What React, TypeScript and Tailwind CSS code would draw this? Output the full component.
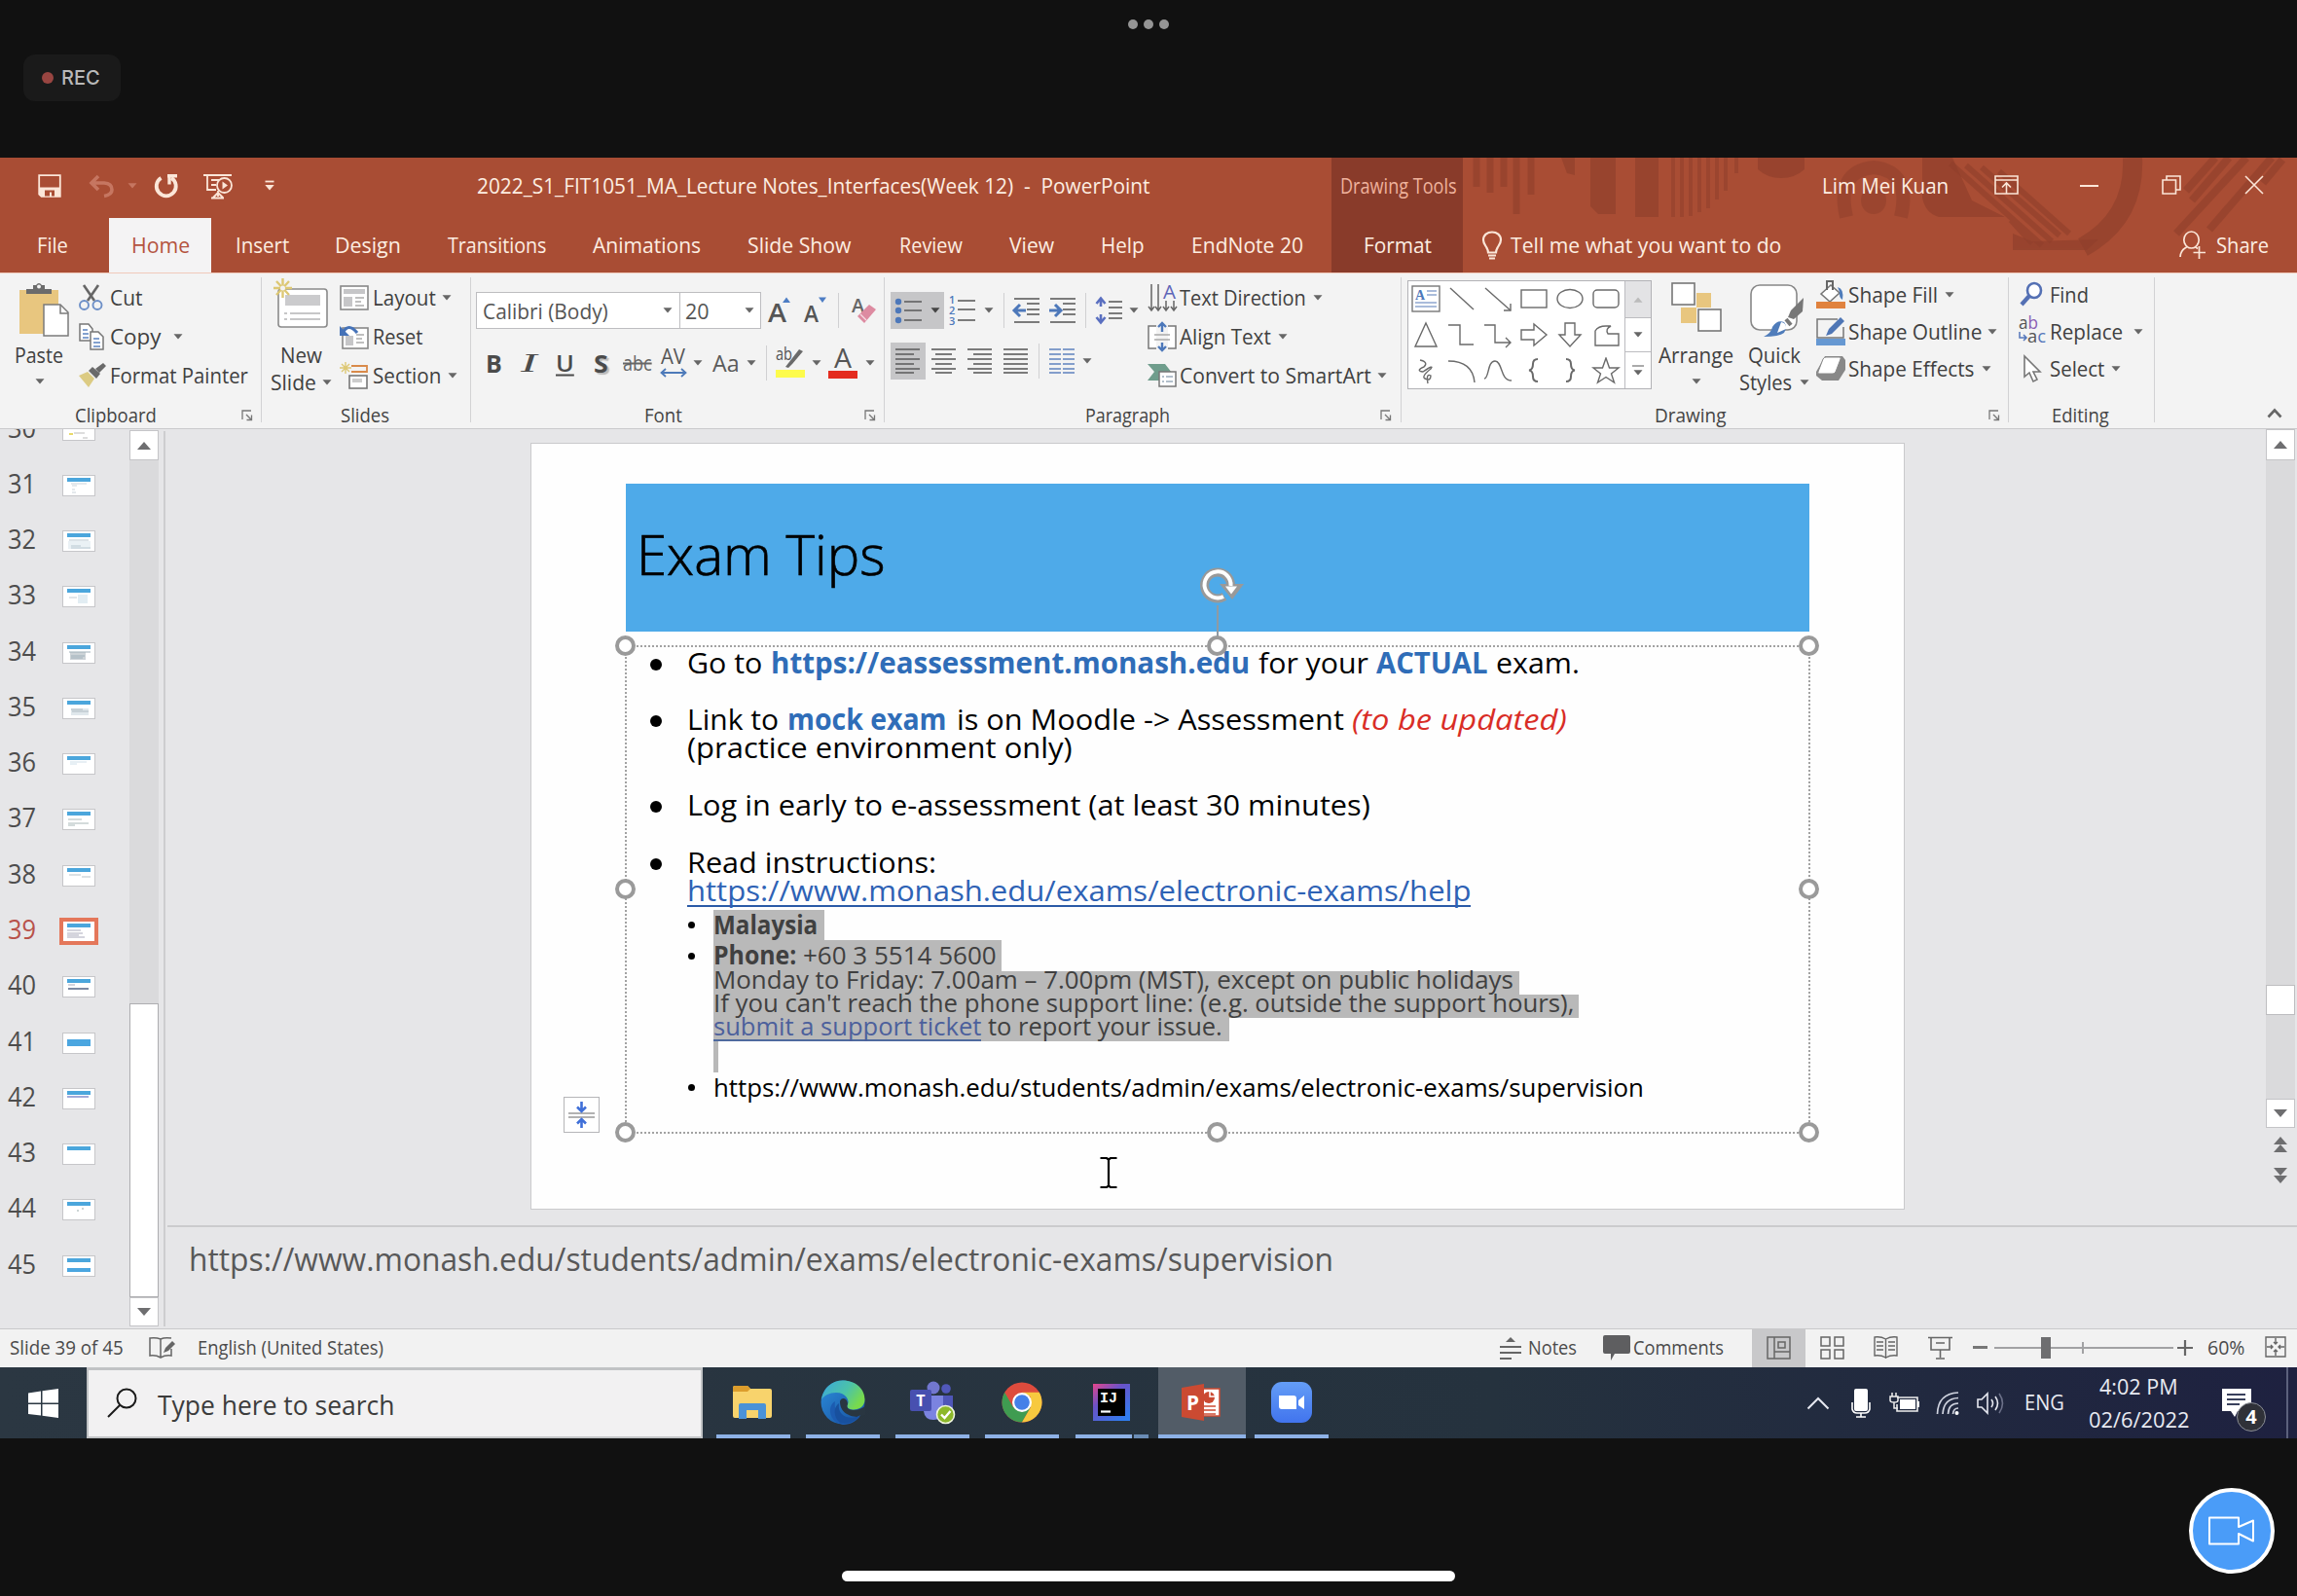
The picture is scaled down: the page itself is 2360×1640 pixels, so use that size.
import React, { useLayoutEffect, useRef, useState, ReactNode } from 'react';

/* Text set to the width of its box: the glyph run is scaled horizontally to fill it. */
function T({ className = '', children }: { className?: string; children: ReactNode }) {
  const outer = useRef<HTMLSpanElement>(null);
  const inner = useRef<HTMLSpanElement>(null);
  const [scale, setScale] = useState(1);
  useLayoutEffect(() => {
    if (outer.current && inner.current) {
      setScale(outer.current.clientWidth / inner.current.offsetWidth);
    }
  }, [children]);
  return (
    <span ref={outer} className={`flex shrink-0 whitespace-pre ${className}`}>
      <span ref={inner} className="block shrink-0 origin-left translate-y-[var(--lift,-1px)]" style={{ transform: `scaleX(${scale})` }}>
        {children}
      </span>
    </span>
  );
}

function Ic({ box, w, h, className = '', children }: { box: string; w: number; h: number; className?: string; children: ReactNode }) {
  return (
    <svg viewBox={box} width={w} height={h} className={`shrink-0 overflow-visible ${className}`} fill="none">
      {children}
    </svg>
  );
}

function Caret({ className = '', fill = '#666' }: { className?: string; fill?: string }) {
  return (
    <svg viewBox="0 0 10 6" width="10" height="6" className={`shrink-0 ${className}`}>
      <path d="M0.5 0.3H9.5L5 5.6Z" fill={fill} />
    </svg>
  );
}

function Launcher({ className = '' }: { className?: string }) {
  return (
    <Ic box="0 0 12 12" w={12} h={12} className={className}>
      <path d="M1 10V1H10M5 5L10 10M10.5 5.5V10.5H5.5" stroke="#777" strokeWidth="1.3" />
    </Ic>
  );
}

function Group({ className, label, children }: { className: string; label: ReactNode; children: ReactNode }) {
  return (
    <section className={`flex h-[160px] shrink-0 ${className}`}>
      <div className="flex min-w-0 flex-1 flex-col">
        <div className="flex h-[130px]">{children}</div>
        <div className="flex h-[30px] items-center pt-[3px] text-[20px] leading-none text-[#444]">{label}</div>
      </div>
      <div className="mt-[5px] h-[149px] w-px bg-[#d2d2d4]" />
    </section>
  );
}

const Sep = ({ className = '' }: { className?: string }) => <span className={`h-[36px] w-px shrink-0 bg-[#d0d0d2] ${className}`} />;

function Backdrop() {
  const c = '#8f3f2b';
  return (
    <svg viewBox="1503 162 857 118" width="857" height="118" className="absolute right-0 top-0" fill="none">
      <g stroke={c} strokeWidth="7" opacity="0.6">
        <path d="M1517 162V192M1531 162V198M1545 162V192M1558 162V220M1573 162V200" />
      </g>
      <g fill={c} opacity="0.65">
        <path d="M1604 162h14v18l-8 -2zM1634 162h26v58h-18l-8 -8zM1680 162h24v61h-24z" />
        <path d="M1806 162h48v12q-10 9 -24 9t-24 -9z" />
        <path d="M1975 162h31l20 44l34 17h-68q-14 -4 -17 -20z" />
        <path d="M2068 240l20 8l68 -2l-12 11h-76z" />
      </g>
      <g stroke={c} strokeWidth="4" opacity="0.55">
        <path d="M1719 162V223M1728 162V223M1737 162V222M1746 162V218M1755 162V214M1764 162V205M1773 162V196M1784 162V178" />
      </g>
      <path d="M1897 223Q1886 176 1925 172Q1964 176 1953 223" stroke={c} strokeWidth="14" opacity="0.55" />
      <ellipse cx="1925" cy="206" rx="13" ry="14" fill={c} opacity="0.55" />
      <g stroke={c} strokeWidth="6" opacity="0.6">
        <path d="M2004 168L2098 252M2020 170L2108 248M2036 172L2116 242M2054 176L2126 240M2066 226L2088 250" />
      </g>
      <path d="M2191 162Q2194 224 2140 254" stroke={c} strokeWidth="20" opacity="0.65" />
      <g stroke={c} strokeWidth="8" opacity="0.6">
        <path d="M2308 162L2236 240M2334 162L2270 236M2276 162L2246 196M2290 162L2252 206M2345 164L2325 188" />
      </g>
    </svg>
  );
}

function TitleBar() {
  const tabs: [string, string][] = [
    ['Insert', 'ml-[25px] w-[55px]'],
    ['Design', 'ml-[47px] w-[68px]'],
    ['Transitions', 'ml-[48px] w-[101px]'],
    ['Animations', 'ml-[48px] w-[111px]'],
    ['Slide Show', 'ml-[48px] w-[107px]'],
    ['Review', 'ml-[49px] w-[65px]'],
    ['View', 'ml-[48px] w-[46px]'],
    ['Help', 'ml-[48px] w-[45px]'],
    ['EndNote 20', 'ml-[48px] w-[115px]'],
  ];
  const s = '#fbe6d8';
  return (
    <header className="relative flex h-[118px] bg-[#a94d34] text-[22px] leading-none text-[#fdeee2]">
      <Backdrop />
      <div className="flex w-[1368px] shrink-0 flex-col">
        <div className="flex h-[58px] items-center">
          <Ic box="0 0 24 24" w={24} h={24} className="ml-[39px]">
            <path d="M1.2 1.2H22.8V22.8H3.6L1.2 20.5Z" stroke={s} strokeWidth="1.8" />
            <path d="M1.5 13.5H22.5V22.5H3.8L1.5 20.3Z" fill={s} />
            <path d="M7 22.5V16.5H17V22.5H14V18.5H12V22.5Z" fill="#a94d34" />
          </Ic>
          <Ic box="0 0 26 24" w={26} h={24} className="ml-[28px]">
            <path d="M3 9H16Q24 9.500 24 16Q24 21 16 22.500M10 2L3 9L10 16" stroke="#c67661" strokeWidth="3.6" />
          </Ic>
          <Caret className="ml-[14px]" fill="#c67661" />
          <Ic box="0 0 25 24" w={25} h={24} className="ml-[17px]">
            <path d="M7.500 3.800A10 10 0 1 0 18 3.800" stroke={s} strokeWidth="3.800" />
            <path d="M14 1.800H24M16 1V10.500" stroke={s} strokeWidth="3.400" />
          </Ic>
          <Ic box="0 0 30 27" w={30} h={27} className="ml-[26px]">
            <path d="M0 2H29M4 2V17H13M8 7H16M8 12H13M15 18V24M8 25.500H21M15 20L10 25M15 20L20 25" stroke={s} strokeWidth="1.8" />
            <circle cx="21.500" cy="12.500" r="7.500" stroke={s} strokeWidth="1.800" fill="#a94d34" />
            <path d="M19.500 8.500V16.500L25 12.500Z" fill={s} />
          </Ic>
          <Ic box="0 0 10 12" w={10} h={12} className="ml-[33px]">
            <path d="M0.500 1.500H9.500" stroke={s} strokeWidth="1.800" />
            <path d="M0.300 5H9.700L5 10.500Z" fill={s} />
          </Ic>
          <T className="ml-[208px] w-[691px]">{'2022_S1_FIT1051_MA_Lecture Notes_Interfaces(Week 12)  -  PowerPoint'}</T>
        </div>
        <div className="mt-[4px] flex h-[56px] items-center">
          <T className="ml-[38px] w-[32px]">File</T>
          <div className="ml-[42px] flex h-[56px] w-[105px] items-center justify-center bg-[#f4f3f4] text-[#b4533f]">
            <T className="w-[60px]">Home</T>
          </div>
          {tabs.map(([name, cls]) => (
            <T key={name} className={cls}>{name}</T>
          ))}
        </div>
      </div>
      <div className="relative flex w-[135px] shrink-0 flex-col items-center bg-[#893b2a]">
        <div className="flex h-[58px] items-center text-[#efb29c]"><T className="ml-[2px] w-[120px]">Drawing Tools</T></div>
        <div className="mt-[4px] flex h-[56px] items-center"><T className="w-[70px]">Format</T></div>
      </div>
      <div className="relative flex flex-1 flex-col">
        <div className="flex h-[58px] items-center">
          <T className="ml-[369px] w-[130px]">Lim Mei Kuan</T>
          <Ic box="0 0 25 20" w={25} h={20} className="mb-[3px] ml-[47px]">
            <path d="M1 1H24V19H1ZM1 5H24M12.500 19V8.500M8 12.500L12.500 8L17 12.500" stroke={s} strokeWidth="1.600" />
          </Ic>
          <span className="ml-[63px] h-[2px] w-[19px] bg-[#fbe6d8]" />
          <Ic box="0 0 20 20" w={20} h={20} className="mb-[3px] ml-[65px]">
            <path d="M1 5H14.500V19H1ZM5 5V1H19V15H14.500" stroke={s} strokeWidth="1.600" />
          </Ic>
          <Ic box="0 0 20 20" w={20} h={20} className="mb-[3px] ml-[65px]">
            <path d="M1 1L19 19M19 1L1 19" stroke={s} strokeWidth="1.600" />
          </Ic>
        </div>
        <div className="mt-[4px] flex h-[56px] items-center">
          <Ic box="0 0 22 30" w={22} h={30} className="ml-[19px]">
            <path d="M7 22.500C7 17 2 15 2 9.500C2 4.500 6 1.500 11 1.500S20 4.500 20 9.500C20 15 15 17 15 22.500Z" stroke={s} strokeWidth="2.200" />
            <path d="M7 25.500H15M8 28.500H14" stroke={s} strokeWidth="2" />
          </Ic>
          <T className="ml-[8px] w-[278px]">Tell me what you want to do</T>
          <Ic box="0 0 28 30" w={28} h={30} className="ml-[409px]">
            <ellipse cx="12.500" cy="9.500" rx="7.700" ry="8.500" stroke={s} strokeWidth="1.700" />
            <path d="M1 27Q1.500 19.500 8.500 16.500M16 16.500L19 18.500M20.500 16V29M14.500 22.500H27" stroke={s} strokeWidth="1.700" />
          </Ic>
          <T className="ml-[10px] w-[54px]">Share</T>
        </div>
      </div>
    </header>
  );
}

const lines = (rows: [number, number, number][], color = '#666') =>
  rows.map(([x1, x2, y]) => <path key={`${x1}-${y}`} d={`M${x1} ${y}H${x2}`} stroke={color} strokeWidth="1.700" />);

function ClipboardGroup() {
  return (
    <Group className="w-[269px]" label={<><T className="ml-[77px] w-[84px]">Clipboard</T><Launcher className="ml-[87px]" /></>}>
      <div className="flex w-[81px] shrink-0 flex-col">
        <Ic box="0 0 51 56" w={51} h={56} className="ml-[20px] mt-[10px]">
          <path d="M0 8H40V53H0Z" fill="#e8c67f" />
          <path d="M7 12V7H14V3H17Q20 -1 23 3H26V7H33V12Z" fill="#6b6b6b" />
          <circle cx="20" cy="4.500" r="2" fill="#f3f3f3" />
          <path d="M25 23H42L50 31V55H25Z" fill="#fff" stroke="#7b7b7b" strokeWidth="1.500" />
          <path d="M42 23V32H50" stroke="#7b7b7b" strokeWidth="1.500" />
        </Ic>
        <T className="ml-[15px] mt-[8px] w-[50px]">Paste</T>
        <Caret className="ml-[36px] mt-[13px]" />
      </div>
      <div className="flex flex-col pt-[6px]">
        <div className="flex h-[40px] items-center">
          <Ic box="0 0 25 26" w={25} h={26}>
            <path d="M5 0L16 16M20 0L9 16" stroke="#666" strokeWidth="2.600" />
            <circle cx="5.500" cy="20.500" r="4.500" stroke="#6d8fc7" strokeWidth="1.900" />
            <circle cx="19" cy="20.500" r="4.500" stroke="#6d8fc7" strokeWidth="1.900" />
          </Ic>
          <T className="ml-[7px] w-[33px]">Cut</T>
        </div>
        <div className="flex h-[40px] items-center">
          <Ic box="0 0 26 28" w={26} h={28}>
            <path d="M1 1H10L14 6V18H1Z" fill="#fff" stroke="#777" strokeWidth="1.500" />
            <path d="M12 9H20L25 14V27H12Z" fill="#fff" stroke="#777" strokeWidth="1.500" />
            <path d="M4 7H9M4 11H10M4 15H10M15 16H21M15 20H22M15 24H22" stroke="#5b82c0" strokeWidth="1.500" />
          </Ic>
          <T className="ml-[6px] w-[52px]">Copy</T>
          <Caret className="ml-[13px]" />
        </div>
        <div className="flex h-[40px] items-center">
          <Ic box="0 0 28 26" w={28} h={26}>
            <path d="M0 13L9 9L16 16L10 25Z" fill="#dccb83" />
            <path d="M10 8L14 4L22 11L18 16ZM17 6L25 0L28 3L21 10Z" fill="#6a6a6a" />
          </Ic>
          <T className="ml-[4px] w-[142px]">Format Painter</T>
        </div>
      </div>
    </Group>
  );
}

function SlidesGroup() {
  return (
    <Group className="w-[215px]" label={<T className="ml-[81px] w-[50px]">Slides</T>}>
      <div className="flex w-[80px] shrink-0 flex-col">
        <Ic box="0 0 56 52" w={56} h={52} className="ml-[12px] mt-[6px]">
          <rect x="5" y="11" width="50" height="39" rx="3" fill="#fff" stroke="#8a8a8a" strokeWidth="1.600" />
          <rect x="12" y="17" width="36" height="11" fill="#cbcbcd" />
          <path d="M11 36H14M17 36H48M11 42H14M17 42H48" stroke="#b5b5b7" strokeWidth="1.500" />
          <path d="M9.500 0V20M0 10H19M3 3L16 17M16 3L3 17" stroke="#ddc874" strokeWidth="2.400" />
          <circle cx="9.500" cy="10" r="2.500" fill="#f3f3f3" />
        </Ic>
        <T className="ml-[19px] mt-[16px] w-[43px]">New</T>
        <div className="mt-[6px] flex items-center">
          <T className="ml-[9px] w-[47px]">Slide</T>
          <Caret className="ml-[6px]" />
        </div>
      </div>
      <div className="flex flex-col pt-[6px]">
        <div className="flex h-[40px] items-center">
          <Ic box="0 0 30 26" w={30} h={26}>
            <rect x="1" y="1" width="28" height="24" fill="#fff" stroke="#888" strokeWidth="1.600" />
            <path d="M4 4H26V9H4ZM4 12H13V22H4Z" fill="#c6c6c8" />
            <path d="M16 13H25M16 17H22M16 21H25" stroke="#aaa" strokeWidth="1.400" />
          </Ic>
          <T className="ml-[4px] w-[65px]">Layout</T>
          <Caret className="ml-[6px]" />
        </div>
        <div className="flex h-[40px] items-center">
          <Ic box="0 0 30 26" w={30} h={26}>
            <rect x="3" y="4" width="26" height="21" fill="#fff" stroke="#888" strokeWidth="1.600" />
            <path d="M6 12H14V22H6Z" fill="#c6c6c8" />
            <path d="M17 11H25M17 15H23M17 19H25" stroke="#aaa" strokeWidth="1.400" />
            <path d="M3 9Q9 -2 18 9" stroke="#4572b8" strokeWidth="3.200" />
            <path d="M0 2V12H10Z" fill="#4572b8" />
          </Ic>
          <T className="ml-[4px] w-[51px]">Reset</T>
        </div>
        <div className="flex h-[40px] items-center">
          <Ic box="0 0 30 28" w={30} h={28}>
            <path d="M12 4H28V10H12" stroke="#d98a4a" strokeWidth="1.800" />
            <path d="M6 0V12M0 6H12M2 2L10 10M10 2L2 10" stroke="#ddc874" strokeWidth="1.400" />
            <rect x="10" y="14" width="18" height="13" fill="#fff" stroke="#777" strokeWidth="1.600" />
            <rect x="13" y="17" width="10" height="4" fill="#ccc" />
          </Ic>
          <T className="ml-[4px] w-[70px]">Section</T>
          <Caret className="ml-[7px]" />
        </div>
      </div>
    </Group>
  );
}

function FontGroup() {
  const f = "'Open Sans', sans-serif";
  return (
    <Group className="w-[425px]" label={<><T className="ml-[178px] w-[39px]">Font</T><Launcher className="ml-[187px]" /></>}>
      <div className="flex flex-col pt-[20px]">
        <div className="flex h-[38px] items-center">
          <div className="ml-[5px] flex h-[38px] w-[210px] items-center border border-[#bdbdc0] bg-white text-[#555]">
            <T className="mt-[2px] ml-[6px] w-[129px]">Calibri (Body)</T>
            <Caret className="ml-[56px]" />
          </div>
          <div className="flex h-[38px] w-[83px] items-center border border-l-0 border-[#bdbdc0] bg-white text-[#555]">
            <T className="mt-[2px] ml-[5px] w-[25px]">20</T>
            <Caret className="ml-[36px]" />
          </div>
          <Ic box="0 0 28 30" w={28} h={30} className="ml-[7px]">
            <text x="0" y="27" fontSize="27" fontWeight="600" fill="#555" fontFamily={f} textLength="19" lengthAdjust="spacingAndGlyphs">A</text>
            <path d="M15 7H23L19 1.500Z" fill="#4d7dc4" />
          </Ic>
          <Ic box="0 0 26 30" w={26} h={30} className="ml-[9px]">
            <text x="0" y="27" fontSize="23" fontWeight="600" fill="#555" fontFamily={f} textLength="15" lengthAdjust="spacingAndGlyphs">A</text>
            <path d="M15 1.500H23L19 7Z" fill="#4d7dc4" />
          </Ic>
          <Sep className="ml-[9px]" />
          <Ic box="0 0 26 30" w={26} h={30} className="ml-[13px]">
            <text x="0" y="17" fontSize="20" fontWeight="600" fill="#666" fontFamily={f} textLength="13" lengthAdjust="spacingAndGlyphs">A</text>
            <path d="M6 21L18 9L25 14L13 28Z" fill="#dd8ba1" />
            <path d="M9 19L15 25" stroke="#f6dbe2" strokeWidth="1.200" />
          </Ic>
        </div>
        <div className="mt-[16px] flex h-[38px] items-center text-[#4b4b4b]">
          <T className="ml-[15px] w-[17px] text-[25px] font-bold">B</T>
          <T className="ml-[19px] w-[16px] font-['Liberation_Serif'] text-[28px] italic">I</T>
          <T className="ml-[20px] w-[19px] text-[24px] font-semibold underline decoration-2 underline-offset-[3px]">U</T>
          <T className="ml-[20px] w-[15px] text-[25px] font-bold [text-shadow:2px_2px_1px_#bbb]">S</T>
          <T className="ml-[15px] w-[30px] text-[21px] text-[#666] line-through">abc</T>
          <Ic box="0 0 28 32" w={28} h={32} className="ml-[8px]">
            <text x="1" y="17" fontSize="21" fill="#555" fontFamily={f} textLength="25" lengthAdjust="spacingAndGlyphs">AV</text>
            <path d="M2 26H26M6 22L1.500 26L6 30M22 22L26.500 26L22 30" stroke="#4d7ab9" strokeWidth="1.800" />
          </Ic>
          <Caret className="ml-[6px]" />
          <T className="ml-[10px] w-[28px] text-[24px] text-[#5a5a5a]">Aa</T>
          <Caret className="ml-[7px]" />
          <Sep className="ml-[10px]" />
          <Ic box="0 0 31 32" w={31} h={32} className="ml-[9px]">
            <text x="0" y="13" fontSize="18" fill="#555" fontFamily={f} textLength="17" lengthAdjust="spacingAndGlyphs">ab</text>
            <path d="M10 20L24 2L28 4L17 17L13 21Z" fill="#6a6a6a" />
            <path d="M0 23H30V31H0Z" fill="#fdfb4c" />
          </Ic>
          <Caret className="ml-[6px]" />
          <Ic box="0 0 31 32" w={31} h={32} className="ml-[7px]">
            <text x="6" y="21" fontSize="27" fill="#555" fontFamily={f} textLength="18" lengthAdjust="spacingAndGlyphs">A</text>
            <path d="M0 24H30V32H0Z" fill="#e42c1f" />
          </Ic>
          <Caret className="ml-[7px]" />
        </div>
      </div>
    </Group>
  );
}

function ParagraphGroup() {
  const blue = '#4d78ba';
  return (
    <Group className="w-[531px]" label={<><T className="ml-[206px] w-[87px]">Paragraph</T><Launcher className="ml-[216px]" /></>}>
      <div className="flex w-[270px] shrink-0 flex-col pt-[20px]">
        <div className="flex h-[38px] items-center">
          <div className="ml-[6px] flex h-[38px] w-[55px] items-center bg-[#c6c6c8]">
            <Ic box="0 0 29 28" w={29} h={28} className="ml-[4px]">
              {lines([[10, 28, 5], [10, 28, 14], [10, 28, 24]])}
              <g fill={blue}><circle cx="4" cy="5" r="3.200" /><circle cx="4" cy="14" r="3.200" /><circle cx="4" cy="24" r="3.200" /></g>
            </Ic>
            <Caret className="ml-[8px]" fill="#444" />
          </div>
          <Ic box="0 0 28 32" w={28} h={32} className="ml-[5px]">
            {lines([[9, 27, 6], [9, 27, 15], [9, 27, 26]])}
            <g fill="#4d78ba" fontSize="11" fontWeight="600" fontFamily="'Open Sans', sans-serif"><text x="0" y="9">1</text><text x="0" y="20">2</text><text x="0" y="31">3</text></g>
          </Ic>
          <Caret className="ml-[8px]" />
          <Sep className="ml-[10px]" />
          <Ic box="0 0 28 28" w={28} h={28} className="ml-[9px]">
            {lines([[1, 27, 2], [14, 27, 7], [14, 27, 13], [14, 27, 18], [1, 27, 26]])}
            <path d="M13 14H2M7 8L1 14L7 20" stroke={blue} strokeWidth="3" />
          </Ic>
          <Ic box="0 0 28 28" w={28} h={28} className="ml-[9px]">
            {lines([[1, 27, 2], [14, 27, 7], [14, 27, 13], [14, 27, 18], [1, 27, 26]])}
            <path d="M0 14H11M6 8L12 14L6 20" stroke={blue} strokeWidth="3" />
          </Ic>
          <Sep className="ml-[9px]" />
          <Ic box="0 0 29 28" w={29} h={28} className="ml-[9px]">
            {lines([[14, 28, 5], [14, 28, 11], [14, 28, 17], [14, 28, 22]])}
            <path d="M6 2V10M6 18V26M1.500 7L6 1.500L10.500 7M1.500 21L6 26.500L10.500 21" stroke="#5a6fc0" strokeWidth="2.600" />
          </Ic>
          <Caret className="ml-[6px]" />
        </div>
        <div className="mt-[14px] flex h-[38px] items-center">
          <div className="ml-[6px] flex h-[38px] w-[36px] items-center justify-center bg-[#c6c6c8]">
            <Ic box="0 0 26 28" w={26} h={28}>{lines([[0, 25, 2], [0, 19, 7], [0, 25, 12], [0, 19, 17], [0, 25, 22], [0, 19, 26]])}</Ic>
          </div>
          <Ic box="0 0 26 28" w={26} h={28} className="ml-[6px]">{lines([[0, 25, 2], [4, 21, 7], [0, 25, 12], [4, 21, 17], [0, 25, 22], [4, 21, 26]])}</Ic>
          <Ic box="0 0 26 28" w={26} h={28} className="ml-[11px]">{lines([[0, 25, 2], [6, 25, 7], [0, 25, 12], [6, 25, 17], [0, 25, 22], [6, 25, 26]])}</Ic>
          <Ic box="0 0 26 28" w={26} h={28} className="ml-[11px]">{lines([[0, 25, 2], [0, 25, 7], [0, 25, 12], [0, 25, 17], [0, 25, 22], [0, 25, 26]])}</Ic>
          <Sep className="ml-[10px]" />
          <Ic box="0 0 27 28" w={27} h={28} className="ml-[10px]">
            {lines([[0, 12, 2], [0, 12, 7], [0, 12, 12], [0, 12, 17], [0, 12, 22], [0, 12, 26]], '#6f8fc4')}
            {lines([[14, 26, 2], [14, 26, 7], [14, 26, 12], [14, 26, 17], [14, 26, 22], [14, 26, 26]], '#6f8fc4')}
          </Ic>
          <Caret className="ml-[7px]" />
        </div>
      </div>
      <div className="flex flex-col pt-[6px]">
        <div className="flex h-[40px] items-center">
          <Ic box="0 0 30 30" w={30} h={30}>
            <path d="M4 1V28M11 1V28M19 18V28M27 18V28M1 24L4 28L7 24M8 24L11 28L14 24M16 24L19 28L22 24M24 24L27 28L30 24" stroke="#666" strokeWidth="1.500" />
            <text x="16" y="16" fontSize="20" fill="#5f66b8" fontFamily="'Open Sans', sans-serif" textLength="13" lengthAdjust="spacingAndGlyphs">A</text>
          </Ic>
          <T className="ml-[3px] w-[130px]">Text Direction</T>
          <Caret className="ml-[7px]" />
        </div>
        <div className="flex h-[40px] items-center">
          <Ic box="0 0 30 30" w={30} h={30}>
            <path d="M9 4H1V27H9M21 4H29V27H21" fill="#fff" stroke="#777" strokeWidth="1.500" />
            <path d="M7 13H23M7 18H23" stroke="#aaa" strokeWidth="1.500" />
            <path d="M15 1V10M11 5L15 1L19 5M15 21V29M11 25L15 29L19 25" stroke={blue} strokeWidth="2.400" />
          </Ic>
          <T className="ml-[3px] w-[94px]">Align Text</T>
          <Caret className="ml-[7px]" />
        </div>
        <div className="flex h-[40px] items-center">
          <Ic box="0 0 30 26" w={30} h={26}>
            <path d="M0 1H18L25 10L18 18H0L7 9Z" fill="#6f9d8c" />
            <rect x="12" y="9" width="17" height="15" fill="#fff" stroke="#777" strokeWidth="1.500" />
            <path d="M15 14H17M19 14H26M15 19H17M19 19H26" stroke="#9ab" strokeWidth="1.500" />
          </Ic>
          <T className="ml-[3px] w-[197px]">Convert to SmartArt</T>
          <Caret className="ml-[6px]" />
        </div>
      </div>
    </Group>
  );
}

function DrawingGroup() {
  const shapes: ReactNode[] = [
    <g key="t"><rect x="1" y="1" width="28" height="26" fill="#fff" stroke="#777" /><text x="4" y="15" fontSize="14" fontWeight="700" fill="#4d78ba" stroke="none" fontFamily="'Liberation Serif', serif">A</text><path d="M16 6H26M16 10H26M4 18H26M4 22H26" stroke="#8ea6cf" /></g>,
    <path key="l" d="M3 3L27 25" />,
    <g key="la"><path d="M2 3L28 26" /><path d="M28 19V26H21" /></g>,
    <rect key="r" x="2" y="5" width="26" height="18" />,
    <ellipse key="e" cx="15" cy="14" rx="13" ry="9.500" />,
    <rect key="rr" x="2" y="5" width="26" height="18" rx="4" />,
    <path key="tr" d="M15 2L26 26H4Z" />,
    <path key="el" d="M1 4H13V24H27" />,
    <path key="ea" d="M1 4H12V22H28M23 17L28 22L23 27" />,
    <path key="ar" d="M2 9H15V3L28 14L15 25V19H2Z" />,
    <path key="ad" d="M10 2V14H4L15 26L26 14H20V2Z" />,
    <path key="pt" d="M4 25V10Q7 5 15 5H20Q14 8 17 13H28V25Z" />,
    <path key="sc" d="M9 3Q18 5 13 10Q4 14 12 15Q24 7 20 12Q10 20 14 22Q20 25 20 19Q15 16 17 27" />,
    <path key="cv" d="M1 4Q26 4 28 26" />,
    <path key="sn" d="M1 22C6 22 4 4 12 4S17 24 29 24" />,
    <path key="lb" d="M19 2Q14 2 14 7Q14 13 10 13.500Q14 14 14 20Q14 25 19 25" strokeWidth="2" />,
    <path key="rb" d="M11 2Q16 2 16 7Q16 13 20 13.500Q16 14 16 20Q16 25 11 25" strokeWidth="2" />,
    <path key="st" d="M15 1L18.500 11H28L20.500 17L23.500 26L15 20.500L6.500 26L9.500 17L2 11H11.500Z" />,
  ];
  return (
    <Group className="w-[624px]" label={<><T className="ml-[260px] w-[73px]">Drawing</T><Launcher className="ml-[270px]" /></>}>
      <div className="ml-[6px] mt-[8px] flex h-[112px] w-[251px] shrink-0 border border-[#b2b2b6] bg-white">
        <div className="grid w-[222px] grid-cols-6 place-items-center pr-px">
          {shapes.map((s, i) => (
            <svg key={i} viewBox="0 0 30 28" width="30" height="28" fill="none" stroke="#6a6a6a" strokeWidth="1.400">{s}</svg>
          ))}
        </div>
        <div className="flex flex-1 flex-col border-l border-[#bcbcc0]">
          <div className="flex flex-1 items-center justify-center bg-[#e3e3e5]"><Caret className="rotate-180" fill="#bbb" /></div>
          <div className="flex h-[36px] items-center justify-center border-y border-[#bcbcc0]"><Caret /></div>
          <div className="flex h-[37px] flex-col items-center justify-center gap-[3px]"><span className="h-[2px] w-[12px] bg-[#aaa]" /><Caret /></div>
        </div>
      </div>
      <div className="flex w-[90px] shrink-0 flex-col">
        <Ic box="0 0 52 52" w={52} h={52} className="ml-[20px] mt-[10px]">
          <path d="M26 11H41V26H26ZM10 26H26V42H10Z" fill="#e8c67f" />
          <rect x="1" y="1" width="23" height="22" fill="#fff" stroke="#777" strokeWidth="1.600" />
          <rect x="28" y="28" width="23" height="22" fill="#fff" stroke="#777" strokeWidth="1.600" />
        </Ic>
        <T className="ml-[7px] mt-[12px] w-[77px]">Arrange</T>
        <Caret className="ml-[41px] mt-[13px]" />
      </div>
      <div className="flex w-[79px] shrink-0 flex-col">
        <Ic box="0 0 56 56" w={56} h={56} className="ml-[11px] mt-[12px]">
          <rect x="1" y="1" width="47" height="46" rx="9" fill="#fff" stroke="#888" strokeWidth="1.600" />
          <path d="M55 14L54 28L45 36L39 34L42 27Z" fill="#777" />
          <path d="M37 36L42 42" stroke="#777" strokeWidth="4" />
          <path d="M14 54Q22 50 23 44Q28 36 35 39Q39 44 35 50Q30 54 14 54Z" fill="#4f7cba" />
          <path d="M32 39Q38 40 37 46L28 50Z" fill="#fff" />
        </Ic>
        <T className="ml-[9px] mt-[6px] w-[54px]">Quick</T>
        <div className="mt-[6px] flex items-center">
          <T className="w-[54px]">Styles</T>
          <Caret className="ml-[8px]" />
        </div>
      </div>
      <div className="flex flex-col pt-[4px]">
        <div className="flex h-[38px] items-center">
          <Ic box="0 0 30 30" w={30} h={30}>
            <path d="M5 14L15 5L24 13L14 22Z" fill="#fff" stroke="#777" strokeWidth="1.600" />
            <path d="M11 10V1H17V10" stroke="#666" strokeWidth="2" />
            <path d="M22 7Q29 9 27 20Q23 17 24 12Z" fill="#4f7cba" />
            <path d="M0 22H30V29H0Z" fill="#e0823e" />
          </Ic>
          <T className="ml-[3px] w-[92px]">Shape Fill</T>
          <Caret className="ml-[7px]" />
        </div>
        <div className="flex h-[38px] items-center">
          <Ic box="0 0 30 30" w={30} h={30}>
            <path d="M22 2H1V21H28V10" stroke="#777" strokeWidth="1.500" />
            <path d="M10 19L13 12L25 0L29 4L16 17Z" fill="#4f76b5" />
            <path d="M0 22H30V29H0Z" fill="#6698d2" />
          </Ic>
          <T className="ml-[3px] w-[137px]">Shape Outline</T>
          <Caret className="ml-[6px]" />
        </div>
        <div className="flex h-[38px] items-center">
          <Ic box="0 0 30 28" w={30} h={28}>
            <path d="M9 1H27L30 5V15L23 26H6L0 21V17Z" fill="#888" />
            <path d="M10 2H24Q26 2 25 4L20 17Q19 19 17 19H3Q1 19 2 17L7 4Q8 2 10 2Z" fill="#fff" stroke="#888" />
          </Ic>
          <T className="ml-[3px] w-[129px]">Shape Effects</T>
          <Caret className="ml-[8px]" />
        </div>
      </div>
    </Group>
  );
}

function EditingGroup() {
  return (
    <Group className="w-[150px]" label={<T className="ml-[44px] w-[59px]">Editing</T>}>
      <div className="flex flex-col pt-[4px]">
        <div className="flex h-[38px] items-center">
          <Ic box="0 0 29 26" w={29} h={26} className="ml-[10px]">
            <ellipse cx="16" cy="8.500" rx="7" ry="7.500" fill="#fff" stroke="#5470b4" strokeWidth="2.600" />
            <path d="M11 14L3 23" stroke="#5470b4" strokeWidth="4.200" />
          </Ic>
          <T className="ml-[3px] w-[40px]">Find</T>
        </div>
        <div className="flex h-[38px] items-center">
          <Ic box="0 0 30 28" w={30} h={28} className="ml-[9px]">
            <g fontFamily="'Open Sans', sans-serif" fontSize="18">
              <text x="1" y="11" fill="#555" textLength="20" lengthAdjust="spacingAndGlyphs">a<tspan fill="#8b5fb5">b</tspan></text>
              <text x="10" y="25" fill="#555" textLength="19" lengthAdjust="spacingAndGlyphs">a<tspan fill="#5577bb">c</tspan></text>
            </g>
            <path d="M2 14V20H8M6 17L9 20L6 23" stroke="#5577bb" strokeWidth="1.500" />
          </Ic>
          <T className="ml-[3px] w-[75px]">Replace</T>
          <Caret className="ml-[11px]" />
        </div>
        <div className="flex h-[38px] items-center">
          <Ic box="0 0 29 28" w={29} h={28} className="ml-[10px]">
            <path d="M6 1V22L11 18L15 27L19 25L15 17H22Z" fill="#fff" stroke="#777" strokeWidth="1.600" />
          </Ic>
          <T className="ml-[3px] w-[56px]">Select</T>
          <Caret className="ml-[7px]" />
        </div>
      </div>
    </Group>
  );
}

function Ribbon() {
  return (
    <div className="flex h-[161px] border-b border-[#c9c9cb] bg-[#f3f3f3] text-[21.500px] leading-[22px] text-[#404040] shadow-[inset_0_1px_0_#f0c9ba] [--lift:-0.500px]">
      <ClipboardGroup />
      <SlidesGroup />
      <FontGroup />
      <ParagraphGroup />
      <DrawingGroup />
      <EditingGroup />
      <div className="flex flex-1 items-end justify-end pb-[10px] pr-[15px]">
        <Ic box="0 0 16 11" w={16} h={11}><path d="M1.500 9.500L8 2.500L14.500 9.500" stroke="#666" strokeWidth="2.600" /></Ic>
      </div>
    </div>
  );
}

const thumbs: { n: number; art: ReactNode }[] = [
  { n: 30, art: <><path d="M6 14H10" stroke="#e8d96a" strokeWidth="2" /><path d="M11 13H22M20 18H25" stroke="#bbb" /></> },
  { n: 31, art: <path d="M8 8H24M9 10H14M9 14H12M9 17H13" stroke="#c9d3da" /> },
  { n: 32, art: <><path d="M5 10H28V18H5Z" fill="#eaf1f5" /><path d="M6 9H26M8 15H18M8 17H28" stroke="#b9c8d1" /></> },
  { n: 33, art: <><path d="M15 8H25V17H15Z" fill="#e2edf3" /><path d="M6 11H14" stroke="#c3ccd2" /></> },
  { n: 34, art: <><path d="M7 9H23V17H7Z" fill="#ccd3d7" /><path d="M6 9H28M8 13H22M8 15H20" stroke="#9fb0ba" /></> },
  { n: 35, art: <><path d="M8 10H26V17H8Z" fill="#e0e8ec" /><path d="M8 11H20M9 13H26" stroke="#aebac1" /></> },
  { n: 36, art: <path d="M7 8H24M7 10H14" stroke="#cfe0ea" /> },
  { n: 37, art: <path d="M5 10H19M5 14H26M5 16H12" stroke="#a9b8b8" /> },
  { n: 38, art: <path d="M6 9H18M19 11H28" stroke="#b9c3c9" /> },
  { n: 39, art: <path d="M4 9H18M4 12H20M4 14H16M4 16H22" stroke="#aab" /> },
  { n: 40, art: <><path d="M5 8H12" stroke="#aab" /><path d="M5 12H26" stroke="#5d6d8c" strokeWidth="1.600" /></> },
  { n: 41, art: <path d="M4 6H28V13H4Z" fill="#4ba6e0" /> },
  { n: 42, art: <path d="M4 8H26" stroke="#7a86c8" strokeWidth="1.400" /> },
  { n: 43, art: null },
  { n: 44, art: <path d="M15 10V12M19 9H21" stroke="#9aa" /> },
  { n: 45, art: <path d="M4 12H28V16H4Z" fill="#4ba6e0" /> },
];

function Thumbnails() {
  return (
    <aside className="flex w-[133px] shrink-0 flex-col overflow-hidden">
      <div className="-mt-[30px] flex flex-col text-[28px] leading-none text-[#4d4d4d]">
        {thumbs.map(({ n, art }) => {
          const sel = n === 39;
          return (
            <div key={n} className="flex h-[57.270px] shrink-0 items-center">
              <T className={sel ? 'ml-[8px] w-[29px] text-[#b8524a]' : 'ml-[8px] w-[29px]'}>{n}</T>
              <div className={sel ? 'ml-[24px] mt-[4px] h-[28px] w-[40px] border-[4px] border-[#e4775a] bg-white' : 'ml-[27px] mt-[4px] h-[22px] w-[34px] border border-[#c6c6c9] bg-white'}>
                <svg viewBox="0 0 32 20" width="32" height="20" fill="none">
                  {n !== 41 && n !== 30 && <path d="M4 2H28V6H4Z" fill="#4ba6dc" />}
                  {art}
                </svg>
              </div>
            </div>
          );
        })}
      </div>
    </aside>
  );
}

const Tri = ({ up = false }: { up?: boolean }) => (
  <svg viewBox="0 0 14 8" width="14" height="8" className={up ? '' : 'rotate-180'}><path d="M0 8L7 0L14 8Z" fill="#6e6e70" /></svg>
);

function Handle({ className }: { className: string }) {
  return <span className={`absolute -ml-[11px] -mt-[11px] h-[21px] w-[21px] rounded-full border-[4px] border-[#9a9a9a] bg-white ${className}`} />;
}

const Dot = () => <span className="ml-[24px] mr-[26px] mt-[5px] h-[12px] w-[12px] shrink-0 rounded-full bg-black" />;
const SmallDot = () => <span className="ml-[63px] mr-[19px] h-[7px] w-[7px] shrink-0 rounded-full bg-black" />;

function SlideBody() {
  return (
    <div className="relative ml-[96px] mt-[14px] h-[502px] w-[1218px] border-[2px] border-dotted border-[#a2a2a2] font-['Open_Sans'] text-black">
      <div className="flex flex-col pt-[1px] text-[30px] leading-[29px]">
        <div className="flex h-[29px] items-center">
          <Dot />
          <T className="w-[77px]">Go to</T>
          <T className="ml-[9px] w-[492px] font-bold text-[#2f6db8]">https://eassessment.monash.edu</T>
          <T className="ml-[9px] w-[113px]">for your</T>
          <T className="ml-[8px] w-[115px] font-bold text-[#2f6db8]">ACTUAL</T>
          <T className="ml-[8px] w-[86px]">exam.</T>
        </div>
        <div className="mt-[29px] flex h-[29px] items-center">
          <Dot />
          <T className="w-[94px]">Link to</T>
          <T className="ml-[9px] w-[164px] font-bold text-[#2f6db8]">mock exam</T>
          <T className="ml-[10px] w-[398px]">{'is on Moodle -> Assessment'}</T>
          <T className="ml-[8px] w-[221px] italic text-[#d92d26]">(to be updated)</T>
        </div>
        <div className="flex h-[29px] items-center"><T className="ml-[62px] w-[396px]">(practice environment only)</T></div>
        <div className="mt-[30px] flex h-[29px] items-center"><Dot /><T className="w-[702px]">Log in early to e-assessment (at least 30 minutes)</T></div>
        <div className="mt-[30px] flex h-[29px] items-center"><Dot /><T className="w-[256px]">Read instructions:</T></div>
        <div className="flex h-[29px] items-center">
          <div className="ml-[62px] h-[34px] border-b-[2px] border-[#2b5aa6]"><T className="mt-[2px] w-[805px] text-[#2e62b5]">https://www.monash.edu/exams/electronic-exams/help</T></div>
        </div>
      </div>
      <div className="mt-[6px] flex flex-col text-[26px] leading-[31px] text-[#404040]">
        <div className="flex h-[31px] items-center"><SmallDot /><div className="flex h-[31px] w-[114px] bg-[#b9b9b9]"><T className="w-[107px] font-bold">Malaysia</T></div></div>
        <div className="flex h-[32px] items-center">
          <SmallDot />
          <div className="flex h-[32px] w-[296px] bg-[#b9b9b9]"><T className="w-[85px] font-bold">Phone:</T><T className="ml-[7px] w-[199px]">+60 3 5514 5600</T></div>
        </div>
        <div className="ml-[89px] flex h-[24px] w-[828px] bg-[#b9b9b9] leading-[16px]"><T className="w-[822px]">Monday to Friday: 7.00am – 7.00pm (MST), except on public holidays</T></div>
        <div className="ml-[89px] flex h-[24px] w-[889px] bg-[#b9b9b9] leading-[16px]"><T className="w-[884px]">If you can't reach the phone support line: (e.g. outside the support hours),</T></div>
        <div className="ml-[89px] flex h-[24px] w-[530px] bg-[#b9b9b9] leading-[16px]">
          <div className="h-[24px] border-b-[2px] border-[#4f6a9e]"><T className="w-[275px] text-[#4c609c]">submit a support ticket</T></div>
          <T className="ml-[7px] w-[241px]">to report your issue.</T>
        </div>
        <div className="ml-[89px] h-[32px] w-[5px] bg-[#b9b9b9]" />
        <div className="flex h-[30px] items-center text-black"><SmallDot /><T className="w-[956px]">https://www.monash.edu/students/admin/exams/electronic-exams/supervision</T></div>
      </div>
      <span className="absolute left-[606px] top-[-43px] h-[36px] w-[2px] bg-[#8f9aa3]" />
      <Handle className="left-[-1px] top-[-1px]" />
      <Handle className="left-1/2 top-[-1px]" />
      <Handle className="left-[1215px] top-[-1px]" />
      <Handle className="left-[-1px] top-1/2" />
      <Handle className="left-[1215px] top-1/2" />
      <Handle className="left-[-1px] top-[499px]" />
      <Handle className="left-1/2 top-[499px]" />
      <Handle className="left-[1215px] top-[499px]" />
      <svg viewBox="-20 -22 50 44" width="50" height="44" className="absolute left-[587px] top-[-86px]" fill="none">
        <path d="M7 12A13.500 13.500 0 1 1 13.500 0" stroke="#999" strokeWidth="9" />
        <path d="M2 -1H27L15 15Z" fill="#999" />
        <path d="M6 12A13.500 13.500 0 1 1 13.500 1" stroke="#fff" strokeWidth="4" />
        <path d="M8 1.500H20L14 9.500Z" fill="#fff" />
      </svg>
    </div>
  );
}

function Editor() {
  return (
    <div className="flex h-[818px]">
      <div className="w-[2158px] shrink-0">
        <div className="relative ml-[375px] mt-[14px] h-[788px] w-[1412px] overflow-hidden border border-[#cacacc] bg-[#fefefe] [--lift:0px]">
          <div className="ml-[97px] mt-[41px] flex h-[152px] w-[1216px] items-center bg-[#4eaae9] font-['Open_Sans'] text-[57px] font-light leading-none text-black">
            <T className="mt-[-8px] ml-[11px] w-[255px] [-webkit-text-stroke:0.700px_#000]">Exam Tips</T>
          </div>
          <SlideBody />
          <div className="absolute left-[33px] top-[671px] h-[37px] w-[37px] border border-[#b5b5b8] bg-white">
            <svg viewBox="0 0 35 35" width="35" height="35" fill="none">
              <path d="M4 16H31M4 20H31" stroke="#999" strokeWidth="1.500" />
              <path d="M17.500 4V14M13 9.500L17.500 14L22 9.500M17.500 31V22M13 26.500L17.500 22L22 26.500" stroke="#3f6fd8" strokeWidth="2.600" />
            </svg>
          </div>
          <svg viewBox="0 0 20 34" width="20" height="34" className="absolute left-[583px] top-[732px]" fill="none">
            <path d="M1.500 2H8L10 3.500L12 2H18.500M10 3V31M1.500 32H8L10 30.500L12 32H18.500" stroke="#000" strokeWidth="2.200" />
          </svg>
        </div>
      </div>
      <div className="flex w-[30px] shrink-0 flex-col items-center">
        <div className="flex h-[32px] w-[30px] items-center justify-center border border-[#c4c4c7] bg-white"><Tri up /></div>
        <div className="h-[539px] w-[30px] bg-[#dadadc]" />
        <div className="h-[31px] w-[30px] border border-[#bdbdc0] bg-white" />
        <div className="h-[86px] w-[30px] bg-[#dadadc]" />
        <div className="flex h-[30px] w-[30px] items-center justify-center border border-[#c4c4c7] bg-white"><Tri /></div>
        <div className="mt-[9px]"><Tri up /><Tri up /></div>
        <div className="mt-[16px]"><Tri /><Tri /></div>
      </div>
    </div>
  );
}

function StatusBar() {
  const g = '#666';
  return (
    <div className="flex h-[40px] items-center border-t border-[#c9c9cb] bg-[#f2f2f2] text-[20px] leading-none text-[#4a4a4a]">
      <T className="ml-[10px] w-[117px]">Slide 39 of 45</T>
      <Ic box="0 0 28 24" w={28} h={24} className="mb-[2px] ml-[26px]">
        <path d="M12 3Q7 1 1 2V20Q7 19 12 22Q17 19 23 20V13M12 3V22M12 3Q16 1 23 2" stroke={g} strokeWidth="1.500" />
        <path d="M15 17L17 12L24 5L27 8L20 15Z" fill={g} />
      </Ic>
      <T className="ml-[22px] w-[191px]">English (United States)</T>
      <Ic box="0 0 22 24" w={22} h={24} className="mb-[2px] ml-[1147px]">
        <path d="M6 6H16L11 1Z" fill={g} /><path d="M0 11H22M0 17H22M0 23H12" stroke={g} strokeWidth="2" />
      </Ic>
      <T className="ml-[7px] w-[50px]">Notes</T>
      <Ic box="0 0 28 26" w={28} h={26} className="mb-[2px] ml-[27px]">
        <path d="M2 0H26Q28 0 28 2V17Q28 19 26 19H12L8 26V19H2Q0 19 0 17V2Q0 0 2 0Z" fill="#5e5e60" />
      </Ic>
      <T className="ml-[3px] w-[93px]">Comments</T>
      <div className="ml-[29px] flex h-[39px] w-[55px] items-center justify-center bg-[#c8c8ca]">
        <Ic box="0 0 25 24" w={25} h={24} className="mb-[2px]"><path d="M1 1H24V23H1ZM8 1V23M8 16H24M12 6H19V12H12Z" stroke={g} strokeWidth="1.500" /></Ic>
      </div>
      <Ic box="0 0 25 24" w={25} h={24} className="mb-[2px] ml-[15px]"><path d="M1 1H10V10H1ZM15 1H24V10H15ZM1 14H10V23H1ZM15 14H24V23H15Z" stroke={g} strokeWidth="1.500" /></Ic>
      <Ic box="0 0 25 24" w={25} h={24} className="mb-[2px] ml-[30px]"><path d="M12.500 3Q7 0 1 1V20Q7 19 12.500 22Q18 19 24 20V1Q18 0 12.500 3ZM12.500 3V23M3 6H10M3 10H10M3 14H10M15 6H22M15 10H22M15 14H22" stroke={g} strokeWidth="1.400" /></Ic>
      <Ic box="0 0 25 24" w={25} h={24} className="mb-[2px] ml-[31px]"><path d="M0 1.500H25M3 2V14H22V2M8 7H17M12.500 14V22M8 23H17" stroke={g} strokeWidth="1.600" /></Ic>
      <span className="mb-[2px] ml-[21px] h-[3px] w-[15px] bg-[#777]" />
      <Ic box="0 0 184 24" w={184} h={24} className="mb-[2px] ml-[7px]">
        <path d="M0 12H184M91 6V18" stroke="#a2a2a4" strokeWidth="2" /><path d="M48 1H58V23H48Z" fill="#6e6e70" />
      </Ic>
      <Ic box="0 0 16 16" w={16} h={16} className="mb-[2px] ml-[4px]"><path d="M0 8H16M8 0V16" stroke="#666" strokeWidth="2.200" /></Ic>
      <T className="ml-[15px] w-[38px]">60%</T>
      <Ic box="0 0 22 22" w={22} h={22} className="mb-[3px] ml-[21px]"><path d="M1 1H21V21H1ZM11 2V8M9 6L11 8L13 6M11 20V14M9 16L11 14L13 16M2 11H8M6 9L8 11L6 13M20 11H14M16 9L14 11L16 13" stroke={g} strokeWidth="1.400" /></Ic>
    </div>
  );
}

function TaskApp({ className, bar, children }: { className: string; bar: ReactNode; children: ReactNode }) {
  return (
    <div className={`flex h-[73px] shrink-0 flex-col items-center ${className}`}>
      <div className="flex h-[69px] items-center pr-[1px] pt-[3px]">{children}</div>
      {bar}
    </div>
  );
}

function Taskbar() {
  const bar = <span className="h-[4px] w-full bg-[#8db1e6]" />;
  return (
    <div className="flex h-[73px] bg-gradient-to-r from-[#2b3742] via-[#25323e] via-65% to-[#1e2140]">
      <div className="flex w-[89px] shrink-0 items-center pl-[29px] pt-[1px]">
        <Ic box="0 0 31 30" w={31} h={30}><path d="M0 4.500L13 2.500V14.500H0ZM14.500 2.300L31 0V14.500H14.500ZM0 16H13V27.500L0 26ZM14.500 16H31V30L14.500 27.800Z" fill="#fff" /></Ic>
      </div>
      <div className="flex w-[633px] shrink-0 items-center border-[2px] border-t-[3px] border-[#c1c3c5] bg-[#f2f1f2] text-[27px] leading-none text-[#3c3c3c]">
        <Ic box="0 0 32 32" w={32} h={32} className="ml-[19px]"><circle cx="20" cy="11" r="9.500" stroke="#1a1a1a" strokeWidth="2" /><path d="M13 18L1 30" stroke="#1a1a1a" strokeWidth="2" /></Ic>
        <T className="mt-[4px] ml-[20px] w-[243px]">Type here to search</T>
      </div>
      <TaskApp className="ml-[14px] w-[76px]" bar={bar}>
        <Ic box="0 0 40 34" w={40} h={34} className="mr-[1px]">
          <path d="M0 2Q0 0 2 0H15L18 3H38Q40 3 40 5V31Q40 33 38 33H2Q0 33 0 31Z" fill="#f8d36c" />
          <path d="M0 2Q0 0 2 0H15L18 3L15 6H0Z" fill="#dc9d2c" />
          <path d="M6 34V20Q6 18 8 18H32Q34 18 34 20V34H26V25H14V34Z" fill="#4a92d8" />
        </Ic>
      </TaskApp>
      <TaskApp className="ml-[16px] w-[76px]" bar={bar}>
        <Ic box="0 0 46 46" w={46} h={46}>
          <defs>
            <linearGradient id="eg" x1="0" y1="0" x2="1" y2="0.500"><stop offset="0" stopColor="#3aa6de" /><stop offset="0.600" stopColor="#4cc3a8" /><stop offset="1" stopColor="#78da4c" /></linearGradient>
            <linearGradient id="eb" x1="0" y1="0" x2="1" y2="1"><stop offset="0" stopColor="#2c8ddb" /><stop offset="1" stopColor="#174f9e" /></linearGradient>
          </defs>
          <circle cx="23" cy="23" r="22.500" fill="url(#eb)" />
          <path d="M1 20C3 8 12 0.500 23 0.500C37 0.500 45.500 10 45.500 20C45.500 27 40 30.500 34 30.500C29 30.500 26 28 28 25C30 21 26 13 16 13C9 13 4 16 1 20Z" fill="url(#eg)" />
          <path d="M20 22C21 17 28 18 28 25C26 28 29 31 34 31C39 31 43 29 46 27V36L40 38C30 38 20 34 20 22Z" fill="#293641" />
          <path d="M15 22C13 34 22 42 33 41L41 36C38 42 31 46 23 46L17 44C8 38 8 26 15 22Z" fill="#1c5bb0" />
          <path d="M19 24C17 36 28 42 40 37C35 44 26 46 20 44C13 38 13 28 19 24Z" fill="#18509e" />
        </Ic>
      </TaskApp>
      <TaskApp className="ml-[16px] w-[76px]" bar={bar}>
        <Ic box="0 0 46 46" w={46} h={46}>
          <circle cx="24" cy="8" r="6.500" fill="#7277cf" /><circle cx="37" cy="9" r="4.800" fill="#5158bb" />
          <path d="M32 16H44V30Q42 38 34 38Z" fill="#4f56b8" /><path d="M14 16H34V32Q33 41 24 41T14 32Z" fill="#7b83e0" />
          <rect x="0" y="10" width="22" height="22" rx="2" fill="#4850b0" />
          <text x="11" y="27" textAnchor="middle" fontSize="16" fontWeight="700" fill="#fff" fontFamily="'Open Sans', sans-serif">T</text>
          <circle cx="36.500" cy="35.500" r="9" fill="#8cb82a" stroke="#eef4dd" strokeWidth="1.600" />
          <path d="M32 35.500L35.500 39L41.500 32" stroke="#fff" strokeWidth="2.400" />
        </Ic>
      </TaskApp>
      <TaskApp className="ml-[16px] w-[76px]" bar={bar}>
        <Ic box="0 0 42 42" w={42} h={42}>
          <circle cx="21" cy="21" r="20.500" fill="#dd4b3d" />
          <path d="M3.200 10.800A20.500 20.500 0 0 0 21 41.500L30 26L21 30.500L12 26Z" fill="#3f9c51" />
          <path d="M38.800 10.800A20.500 20.500 0 0 1 21 41.500L30 26L29.500 15L21 10.800Z" fill="#f7c93f" />
          <circle cx="21" cy="21" r="10" fill="#fff" /><circle cx="21" cy="21" r="7.800" fill="#4480e8" />
        </Ic>
      </TaskApp>
      <TaskApp className="ml-[17px] w-[75px]" bar={<span className="flex h-[4px] w-full gap-[2px]"><span className="w-[58px] bg-[#8db1e6]" /><span className="w-[15px] bg-[#6a8cb5]" /></span>}>
        <Ic box="0 0 38 38" w={38} h={38} className="mr-[1px]">
          <defs><linearGradient id="ij" x1="0" y1="0" x2="0.800" y2="1"><stop offset="0" stopColor="#e8468a" /><stop offset="0.400" stopColor="#6a52c8" /><stop offset="1" stopColor="#2f7df0" /></linearGradient></defs>
          <path d="M0 0H38V38H0Z" fill="url(#ij)" /><path d="M5 5H33V33H5Z" fill="#000" />
          <text x="7" y="19" fontSize="15" fontWeight="700" fill="#fff" fontFamily="'Liberation Mono', monospace">IJ</text>
          <path d="M8 28.500H18" stroke="#fff" strokeWidth="2.200" />
        </Ic>
      </TaskApp>
      <TaskApp className="ml-[10px] w-[90px] bg-[#525c67]" bar={bar}>
        <Ic box="0 0 40 38" w={40} h={38} className="mr-[1px]">
          <path d="M20 5H39V33H20Z" fill="#fff" stroke="#cb4a32" strokeWidth="1.500" />
          <circle cx="28" cy="14" r="6" fill="#cb4a32" /><path d="M29 7V13H35" stroke="#fff" strokeWidth="1.500" />
          <path d="M23 23H35M23 27H35M23 31H35" stroke="#cb4a32" strokeWidth="1.700" />
          <path d="M0 4L23 0V38L0 34Z" fill="#cb4a32" />
          <text x="5" y="27" fontSize="22" fontWeight="700" fill="#fff" fontFamily="'Open Sans', sans-serif" textLength="13" lengthAdjust="spacingAndGlyphs">P</text>
        </Ic>
      </TaskApp>
      <TaskApp className="ml-[9px] w-[76px]" bar={bar}>
        <Ic box="0 0 42 42" w={42} h={42}>
          <defs><linearGradient id="zm" x1="0" y1="0" x2="0" y2="1"><stop offset="0" stopColor="#649df6" /><stop offset="1" stopColor="#4174ee" /></linearGradient></defs>
          <rect width="42" height="42" rx="11" fill="url(#zm)" />
          <path d="M8 14H23Q26 14 26 17V28H11Q8 28 8 25ZM28 19L34 14V28L28 24Z" fill="#fff" />
        </Ic>
      </TaskApp>
      <div className="flex flex-1 items-center text-[21px] leading-none text-[#e9ebf2]">
        <Ic box="0 0 24 14" w={24} h={14} className="ml-[491px]"><path d="M1.500 12.500L12 2L22.500 12.500" stroke="#e6e8f0" strokeWidth="2" /></Ic>
        <Ic box="0 0 20 30" w={20} h={30} className="ml-[22px]"><rect x="3" y="0" width="14" height="23" rx="2" fill="#fff" /><path d="M1 14V21Q2 25 6 25H14Q18 25 19 21V14M10 25V29M5 29H15" stroke="#fff" strokeWidth="1.600" /></Ic>
        <Ic box="0 0 32 22" w={32} h={22} className="ml-[19px]">
          <path d="M8 5H29V19H8V12" stroke="#eee" strokeWidth="1.600" /><path d="M11 7H27V17H11ZM29 9H31V15H29Z" fill="#fff" />
          <path d="M3 0V4M7 0V4M1 4H9V8Q9 10 5 10T1 8ZM5 10V16H9" stroke="#eee" strokeWidth="1.500" />
        </Ic>
        <Ic box="0 0 26 26" w={26} h={26} className="ml-[16px]">
          <path d="M1.500 24Q2 3 23 2M7 24Q8 8 23 7.500M12.500 24Q13 13 23 13M17.500 24Q18 18 23 18" stroke="#cfd3df" strokeWidth="1.700" /><circle cx="21.500" cy="23" r="2" fill="#fff" />
        </Ic>
        <Ic box="0 0 28 24" w={28} h={24} className="ml-[16px]">
          <path d="M1 8H5L11 2V22L5 16H1Z" stroke="#e6e8f0" strokeWidth="1.600" /><path d="M15 8Q18 12 15 16M19 5Q24 12 19 19" stroke="#e6e8f0" strokeWidth="1.600" /><path d="M23 2Q30 12 23 22" stroke="#6b7088" strokeWidth="1.600" />
        </Ic>
        <T className="mt-[2px] ml-[21px] w-[41px]">ENG</T>
        <div className="mt-[4px] ml-[25px] flex w-[103px] flex-col items-center gap-[13px]">
          <T className="w-[81px]">4:02 PM</T>
          <T className="w-[103px]">02/6/2022</T>
        </div>
        <div className="relative ml-[34px]">
          <Ic box="0 0 30 29" w={30} h={29}><path d="M0 0H30V23H16L13 29L9 23H0Z" fill="#fff" /><path d="M5 6H24M5 11H24M5 16H18" stroke="#39405c" strokeWidth="1.800" /></Ic>
          <span className="absolute left-[15px] top-[14px] flex h-[30px] w-[30px] items-center justify-center rounded-full border border-[#8b8e96] bg-[#2f3138] text-[20px] font-bold text-white">4</span>
        </div>
        <span className="ml-[36px] h-[73px] w-[2px] bg-[#5c617c]" />
      </div>
    </div>
  );
}

export default function App() {
  return (
    <div className="relative flex h-[1640px] w-[2360px] flex-col overflow-hidden bg-[#111111] font-['Open_Sans',sans-serif]">
      <div className="flex h-[162px] shrink-0 flex-col">
        <div className="mt-[20px] flex h-[10px] justify-center gap-[6px]">
          <span className="h-[10px] w-[10px] rounded-full bg-[#959595]" />
          <span className="h-[10px] w-[10px] rounded-full bg-[#959595]" />
          <span className="h-[10px] w-[10px] rounded-full bg-[#959595]" />
        </div>
        <div className="mt-[26px] ml-[24px] flex h-[48px] w-[100px] items-center rounded-[12px] bg-[#1a1a1a] [--lift:0px]">
          <span className="ml-[19px] h-[12px] w-[12px] rounded-full bg-[#984541]" />
          <T className="ml-[8px] w-[40px] font-['Inter'] text-[20px] font-medium leading-none text-[#b9b9b9]">REC</T>
        </div>
      </div>
      <TitleBar />
      <Ribbon />
      <div className="flex h-[924px] shrink-0 bg-[#e6e6e8]">
        <Thumbnails />
        <div className="flex w-[30px] shrink-0 flex-col">
          <div className="mt-px flex h-[31px] items-center justify-center border border-[#c4c4c7] bg-white"><Tri up /></div>
          <div className="h-[558px] bg-[#dadadc]" />
          <div className="h-[302px] border border-[#adadb0] bg-white" />
          <div className="flex h-[30px] items-center justify-center border border-[#c4c4c7] bg-white"><Tri /></div>
        </div>
        <div className="mt-[2px] ml-[5px] h-[920px] w-[2px] bg-[#cdcdcf]" />
        <div className="flex flex-1 flex-col">
          <Editor />
          <div className="ml-[2px] h-[2px] bg-[#cbcbcd]" />
          <T className="mt-[17px] ml-[24px] w-[1176px] text-[33px] leading-[34px] text-[#585858]">https://www.monash.edu/students/admin/exams/electronic-exams/supervision</T>
        </div>
      </div>
      <StatusBar />
      <Taskbar />
      <div className="flex h-[162px] shrink-0 flex-col items-center">
        <span className="mt-[136px] ml-[-1px] h-[11px] w-[630px] rounded-full bg-white" />
      </div>
      <div className="absolute right-[23px] bottom-[23px] flex h-[88px] w-[88px] items-center justify-center rounded-full border-[4px] border-white bg-[#4a9cf8]">
        <svg viewBox="0 0 48 30" width="48" height="30" fill="none" stroke="#fff" strokeWidth="2" strokeLinejoin="round">
          <path d="M1 1.500H31V11L46 4.500V25.500L31 18V28.500H1Z" />
        </svg>
      </div>
    </div>
  );
}
